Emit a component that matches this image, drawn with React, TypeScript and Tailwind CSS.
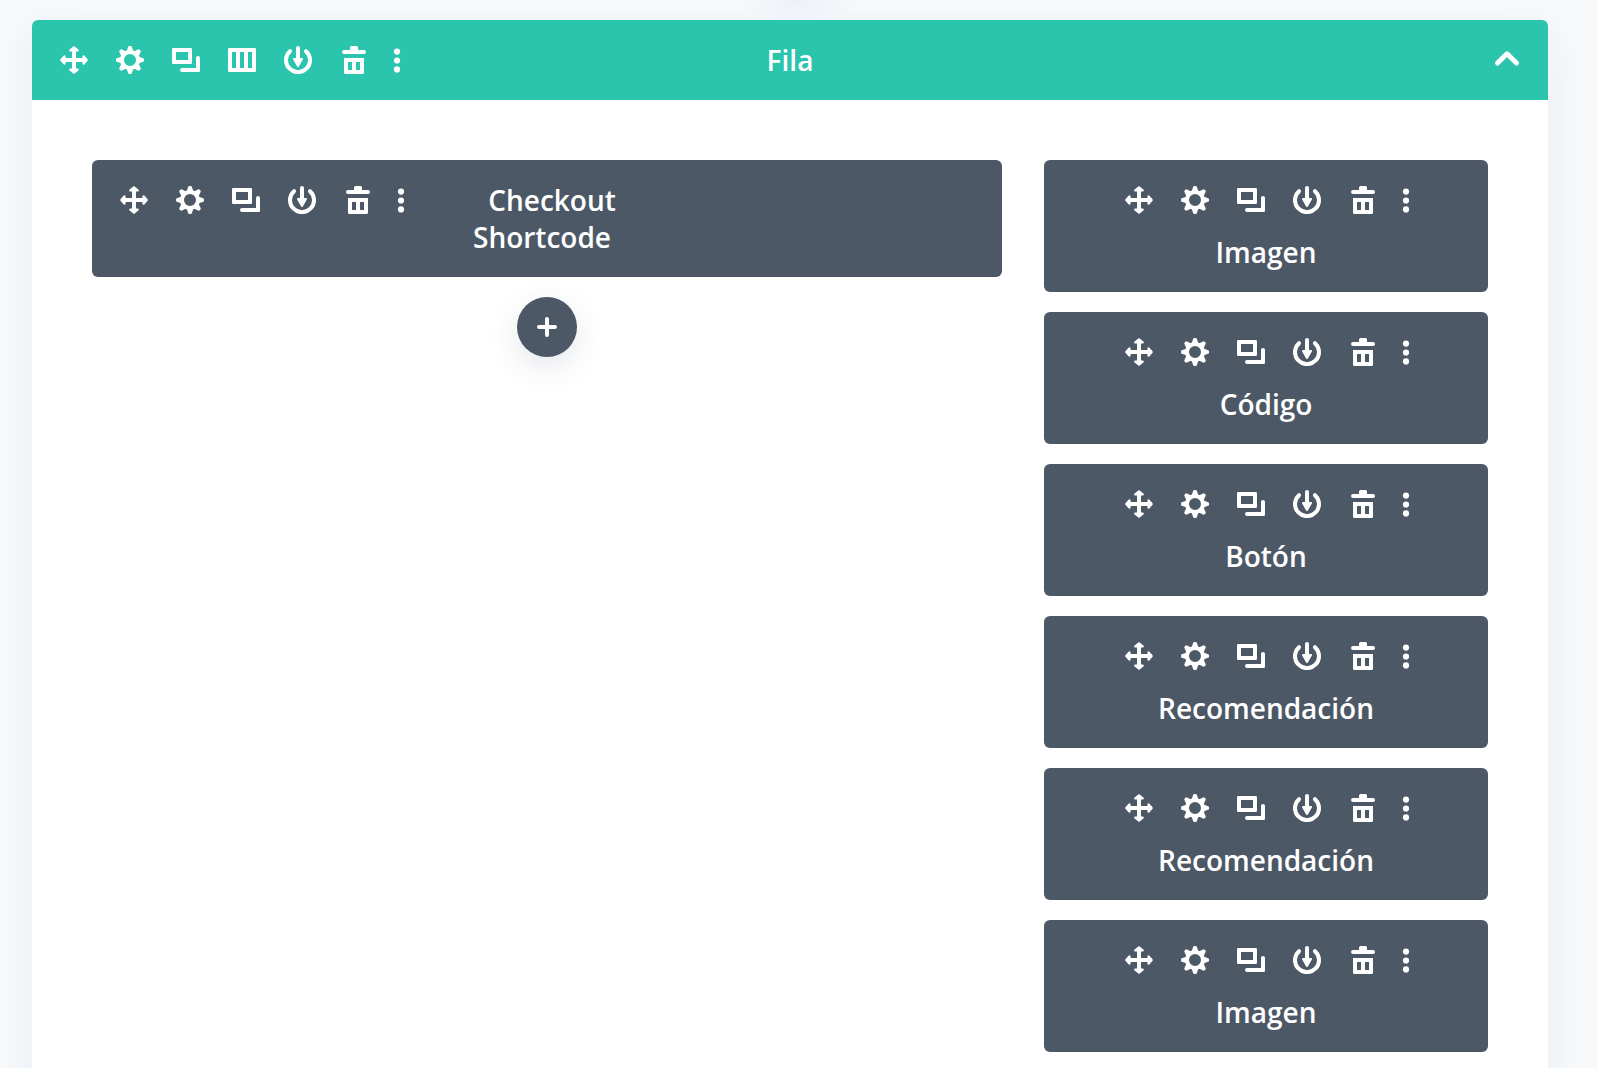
import { useState, type ReactNode } from "react";

const svgProps = {
  viewBox: "0 0 28 28",
  fill: "currentColor",
  className: "size-7 shrink-0",
  "aria-hidden": true,
} as const;

function MoveIcon() {
  return (
    <svg {...svgProps}>
      <path d="M12 4h4v20h-4z M4 12h20v4H4z" />
      <g stroke="currentColor" strokeWidth="2.4" strokeLinejoin="round">
        {[0, 90, 180, 270].map((a) => (
          <path key={a} d="M14 1.4 17.6 4.4 10.4 4.4Z" transform={`rotate(${a} 14 14)`} />
        ))}
      </g>
    </svg>
  );
}

function GearIcon() {
  return (
    <svg {...svgProps}>
      <circle cx="14" cy="14" r="8" fill="none" stroke="currentColor" strokeWidth="4" />
      <g stroke="currentColor" strokeWidth="2.4" strokeLinejoin="round">
        {[0, 45, 90, 135, 180, 225, 270, 315].map((a) => (
          <path key={a} d="M13.3 1.2h1.4L16.2 5.6h-4.4Z" transform={`rotate(${a} 14 14)`} />
        ))}
      </g>
    </svg>
  );
}

function DuplicateIcon() {
  return (
    <svg {...svgProps}>
      <path
        fillRule="evenodd"
        d="M1.2 2h17.6A1.2 1.2 0 0 1 20 3.2v13.6a1.2 1.2 0 0 1-1.2 1.2H1.2A1.2 1.2 0 0 1 0 16.8V3.2A1.2 1.2 0 0 1 1.2 2ZM4 6v8h12V6Z"
      />
      <path d="M26 10a2 2 0 0 1 2 2v12.8a1.2 1.2 0 0 1-1.2 1.2H10a2 2 0 0 1 0-4h14V12a2 2 0 0 1 2-2Z" />
    </svg>
  );
}

function ColumnsIcon() {
  return (
    <svg {...svgProps}>
      <path
        fillRule="evenodd"
        d="M1.2 2h25.6A1.2 1.2 0 0 1 28 3.2v21.6a1.2 1.2 0 0 1-1.2 1.2H1.2A1.2 1.2 0 0 1 0 24.8V3.2A1.2 1.2 0 0 1 1.2 2ZM4 6v16h4V6ZM12 6v16h4V6ZM20 6v16h4V6Z"
      />
    </svg>
  );
}

function SaveIcon() {
  return (
    <svg {...svgProps}>
      <path
        d="M6 5.2A12 12 0 1 0 22 5.2"
        fill="none"
        stroke="currentColor"
        strokeWidth="4"
        strokeLinecap="round"
      />
      <path d="M14 2v12" stroke="currentColor" strokeWidth="4" strokeLinecap="round" />
      <path d="M10 13h8L14 20Z" stroke="currentColor" strokeWidth="2" strokeLinejoin="round" />
    </svg>
  );
}

function TrashIcon() {
  return (
    <svg {...svgProps}>
      <path d="M11.5 0h5A1.5 1.5 0 0 1 18 1.5V4h6a2 2 0 0 1 0 4H4a2 2 0 0 1 0-4h6V1.5A1.5 1.5 0 0 1 11.5 0Z" />
      <path
        fillRule="evenodd"
        d="M4 12h20v14.5a1.5 1.5 0 0 1-1.5 1.5h-17A1.5 1.5 0 0 1 4 26.5ZM8 16v8h4v-8ZM16 16v8h4v-8Z"
      />
    </svg>
  );
}

function MoreIcon() {
  return (
    <svg {...svgProps}>
      <circle cx="14" cy="5.6" r="3.1" />
      <circle cx="14" cy="14.5" r="3.1" />
      <circle cx="14" cy="23.4" r="3.1" />
    </svg>
  );
}

function Tool({ label, narrow, children }: { label: string; narrow?: boolean; children: ReactNode }) {
  return (
    <button
      type="button"
      aria-label={label}
      className={
        narrow
          ? "flex h-14 w-[30px] shrink-0 cursor-pointer items-center justify-center"
          : "flex h-14 w-14 shrink-0 cursor-pointer items-center justify-center"
      }
    >
      {children}
    </button>
  );
}

function Toolbar({ columns = false }: { columns?: boolean }) {
  return (
    <div className="flex items-center">
      <Tool label="Mover"><MoveIcon /></Tool>
      <Tool label="Ajustes"><GearIcon /></Tool>
      <Tool label="Duplicar"><DuplicateIcon /></Tool>
      {columns && <Tool label="Columnas"><ColumnsIcon /></Tool>}
      <Tool label="Guardar"><SaveIcon /></Tool>
      <Tool label="Eliminar"><TrashIcon /></Tool>
      <Tool label="Más" narrow><MoreIcon /></Tool>
    </div>
  );
}

function StackedModule({ title }: { title: string }) {
  return (
    <article className="flex flex-col items-center rounded-md bg-[#4c5866] pt-3 pb-[21px]">
      <Toolbar />
      <h3 className="mt-1.5">{title}</h3>
    </article>
  );
}

const modules = ["Imagen", "Código", "Botón", "Recomendación", "Recomendación", "Imagen"];

export default function App() {
  const [open, setOpen] = useState(true);

  return (
    <div className="relative h-screen overflow-hidden bg-[#f7f9fb] px-8 pt-5 font-['Open_Sans',sans-serif] text-[28px] leading-[37px] font-semibold text-white">
      <div className="absolute -top-20 left-1/2 size-15 -translate-x-1/2 rounded-full shadow-[0_14px_40px_rgba(60,100,235,0.18)]" />
      <section className="relative mr-[18px] min-h-full rounded-t-md bg-white shadow-[0_10px_40px_rgba(43,87,135,0.07)]">
        <header className="grid h-20 grid-cols-[1fr_auto_1fr] items-center rounded-t-md bg-[#2bc4ac] pl-3.5">
          <Toolbar columns />
          <h2 className="pr-3.5">Fila</h2>
          <button
            type="button"
            aria-label="Contraer"
            aria-expanded={open}
            onClick={() => setOpen(!open)}
            className="mr-[27px] flex h-14 w-7 cursor-pointer items-center justify-center justify-self-end"
          >
            <svg {...svgProps} fill="none" stroke="currentColor" strokeWidth="5" strokeLinecap="round" strokeLinejoin="round">
              <path d="M4.5 17 14 7.8 23.5 17" />
            </svg>
          </button>
        </header>

        {open && (
          <div className="grid grid-cols-[910fr_444fr] items-start gap-[42px] p-[60px]">
            <div className="flex flex-col items-center gap-5">
              <article className="grid w-full grid-cols-[1fr_auto_1fr] items-start rounded-md bg-[#4c5866]">
                <div className="pt-3 pl-3.5">
                  <Toolbar />
                </div>
                <h3 className="pt-[22px] pb-[21px] text-center">
                  <span className="block pl-2.5">Checkout</span>
                  <span className="block pr-2.5">Shortcode</span>
                </h3>
              </article>
              <button
                type="button"
                aria-label="Añadir módulo"
                className="flex size-15 cursor-pointer items-center justify-center rounded-full bg-[#4c5866] shadow-[0_10px_30px_rgba(43,60,90,0.12)]"
              >
                <svg {...svgProps} fill="none" stroke="currentColor" strokeWidth="4" strokeLinecap="round">
                  <path d="M14 6v16M6 14h16" />
                </svg>
              </button>
            </div>

            <div className="flex flex-col gap-5">
              {modules.map((title, i) => (
                <StackedModule key={i} title={title} />
              ))}
            </div>
          </div>
        )}
      </section>
    </div>
  );
}
